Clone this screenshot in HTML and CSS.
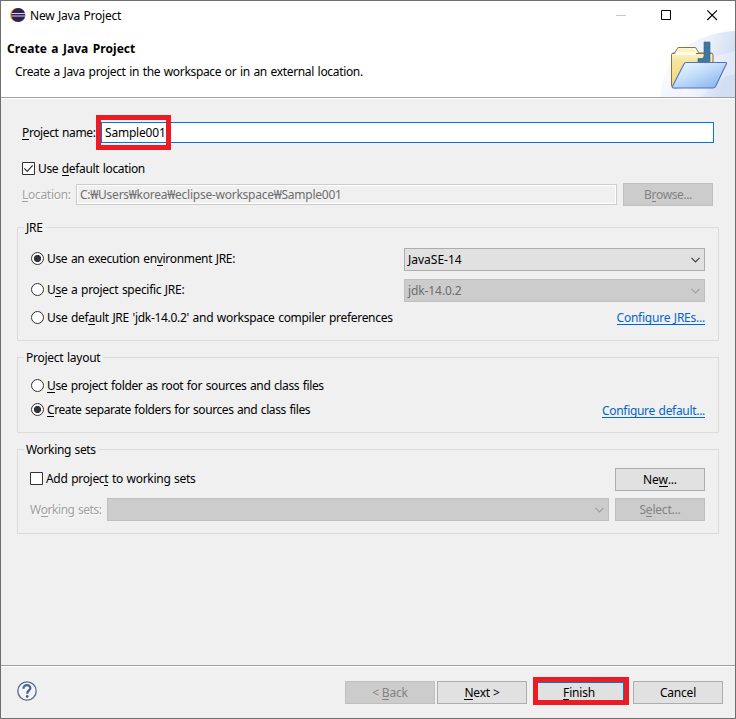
FILE: index.html
```html
<!DOCTYPE html>
<html lang="en">
<head>
<meta charset="utf-8">
<title>New Java Project</title>
<link rel="stylesheet" href="styles.css">
</head>
<body>
<main class="window">
  <header class="header">
    <div class="titlebar">
      <svg class="app-icon" width="16" height="16" viewBox="0 0 16 16">
        <circle cx="7.2" cy="8" r="7.1" fill="#f7941e"/>
        <circle cx="8.3" cy="8" r="7" fill="#2c2255"/>
        <path d="M1.500 6.500h13.800M1.500 9h13.800" stroke="#d5d2e6" stroke-width="1.200"/>
      </svg>
      <span class="t t-title">New Java Project</span>
      <svg class="controls" width="102" height="12" viewBox="0 0 102 12" fill="none">
        <path d="M0 6.5h10" stroke="#c8c8c8"/>
        <path d="M45.500 1.500h9v9h-9z" stroke="#000"/>
        <path d="M91.300 1.300l9.700 9.700M101 1.300l-9.700 9.700" stroke="#000" stroke-width="1.100"/>
      </svg>
    </div>
    <div class="banner-text">
      <h1 class="t t-head">Create a Java Project</h1>
      <p class="t t-sub">Create a Java project in the workspace or in an external location.</p>
    </div>
    <svg class="banner" width="75" height="66" viewBox="0 0 75 66">
      <defs>
        <linearGradient id="swoosh" x1="0" y1="0" x2="1" y2=".3"><stop offset="0" stop-color="#fdfdff"/><stop offset=".6" stop-color="#edf2fb"/><stop offset="1" stop-color="#d3def3"/></linearGradient>
        <linearGradient id="back" x1="0" y1="0" x2="0" y2="1"><stop offset="0" stop-color="#fffdf0"/><stop offset=".35" stop-color="#f5e49b"/><stop offset="1" stop-color="#f0d878"/></linearGradient>
        <linearGradient id="front" x1="0" y1="0" x2=".9" y2="1"><stop offset="0" stop-color="#f2faff"/><stop offset=".45" stop-color="#c5dffa"/><stop offset="1" stop-color="#86b0ec"/></linearGradient>
      </defs>
      <path d="M0 66C1 48 9 31 22 19C38 6 56 1 75 0V66z" fill="url(#swoosh)"/>
      <path d="M38 33Q54 25 75 20V43Q55 46 42 66H20Q25 42 38 33z" fill="#fff" opacity=".3"/>
      <g transform="translate(-1)">
      <path d="M12.500 55V23.500q0-1.500 2-1.500h1l3.500-5.500h17.500l3.500 5.500h12q2 0 2 2V52l-38 5z" fill="url(#back)" stroke="#8c7048"/>
      <path d="M13.500 22.500h39" stroke="#8c7048" stroke-width="1"/>
      <path d="M17 21.500h20l-2.500-4h-15z" fill="#fbf3c4"/>
      <path d="M14 24h23v-3h-19z" fill="#fffce8"/>
      <path d="M45 11h6v18q0 6-6 6h-6v-7.500h3.500q2.500 0 2.500-3z" fill="#41779f" stroke="#2c6392" stroke-width=".6"/>
      <path d="M27 31.500h39.500q1.700 0 .8 1.500L56.500 55.500q-.8 1.500-2.500 1.500H14.500q-2 0-1-1.800L25 33q.8-1.500 2-1.500z" fill="url(#front)" stroke="#5471ba" stroke-width="1.100"/>
      </g>
    </svg>
  </header>

  <section class="content">
    <div class="row name-row">
      <label class="t t-name"><u>P</u>roject name:</label>
      <div class="input active"><span class="t t-sample">Sample001</span><i class="mark mark-name"></i></div>
    </div>
    <div class="row default-row">
      <svg class="check" width="13" height="13" viewBox="0 0 13 13"><path d="M.5.5h12v12H.5z" fill="#fff" stroke="#333"/><path d="M2.300 6.300l2.900 3 5.500-6" fill="none" stroke="#333" stroke-width="1.200"/></svg>
      <label class="t t-default">Use <u>d</u>efault location</label>
    </div>
    <div class="row location-row">
      <label class="t t-loc etched"><u>L</u>ocation:</label>
      <div class="input disabled"><span class="t t-path">C:₩Users₩korea₩eclipse-workspace₩Sample001</span></div>
      <button class="btn" disabled><span class="t t-browse">B<u>r</u>owse...</span></button>
    </div>

    <section class="group jre">
      <h2 class="t t-jre">JRE</h2>
      <div class="row line-1">
        <div class="option"><i class="radio on"></i><label class="t t-r1">Use an execution en<u>v</u>ironment JRE:</label></div>
        <div class="combo"><span class="t t-se">JavaSE-14</span><svg width="9" height="6" viewBox="0 0 9 6"><path d="M.5.8l4 4 4-4"/></svg></div>
      </div>
      <div class="row line-2">
        <div class="option"><i class="radio"></i><label class="t t-r2">U<u>s</u>e a project specific JRE:</label></div>
        <div class="combo off"><span class="t t-jdk">jdk-14.0.2</span><svg width="9" height="6" viewBox="0 0 9 6"><path d="M.5.8l4 4 4-4"/></svg></div>
      </div>
      <div class="row line-3">
        <i class="radio"></i><label class="t t-r3">Use def<u>a</u>ult JRE 'jdk-14.0.2' and workspace compiler preferences</label>
        <a class="t link t-l1">Configure JREs...</a>
      </div>
    </section>

    <section class="group layout">
      <h2 class="t t-lay">Project layout</h2>
      <div class="row line-4"><i class="radio"></i><label class="t t-r4"><u>U</u>se project folder as root for sources and class files</label></div>
      <div class="row line-5"><i class="radio on"></i><label class="t t-r5"><u>C</u>reate separate folders for sources and class files</label>
        <a class="t link t-l2">Configure default...</a>
      </div>
    </section>

    <section class="group sets">
      <h2 class="t t-ws">Working sets</h2>
      <div class="row line-6">
        <div class="option"><svg class="check" width="13" height="13" viewBox="0 0 13 13"><path d="M.5.5h12v12H.5z" fill="#fff" stroke="#333"/></svg>
        <label class="t t-add">Add projec<u>t</u> to working sets</label></div>
        <button class="btn"><span class="t t-new">Ne<u>w</u>...</span></button>
      </div>
      <div class="row line-7">
        <label class="t t-wsl etched">W<u>o</u>rking sets:</label>
        <div class="combo off wide"><svg width="9" height="6" viewBox="0 0 9 6"><path d="M.5.8l4 4 4-4"/></svg></div>
        <button class="btn" disabled><span class="t t-sel">S<u>e</u>lect...</span></button>
      </div>
    </section>
  </section>

  <footer class="footer">
    <svg class="help" width="20" height="20" viewBox="0 0 20 20" fill="none">
      <circle cx="10" cy="10" r="9.200" fill="#f5f5f8" stroke="#566b92" stroke-width="1.300"/>
      <path d="M6.500 7.700C6.300 2.900 13.500 3 13.300 7.200C13.200 9.400 10.200 9.700 10.200 12.700" stroke="#4b6390" stroke-width="2.300"/>
      <circle cx="10.200" cy="15.500" r="1.400" fill="#4b6390"/>
    </svg>
    <button class="btn back" disabled><span class="t t-back">&lt; <u>B</u>ack</span></button>
    <button class="btn next"><span class="t t-next"><u>N</u>ext &gt;</span></button>
    <button class="btn finish"><span class="t t-finish"><u>F</u>inish</span><i class="mark mark-finish"></i></button>
    <button class="btn cancel"><span class="t t-cancel">Cancel</span></button>
  </footer>
</main>
</body>
</html>
```
FILE: styles.css
```css
* { box-sizing: border-box; }
body { margin: 0; font: 12px/16px "Noto Sans", "Noto Sans CJK KR", sans-serif; color: #000; }
h1, h2, p { margin: 0; font: inherit; }
.window { width: 736px; height: 719px; border: 1px solid #6f6f6f; background: #f0f0f0; display: flex; flex-direction: column; overflow: hidden; }
.t { display: block; white-space: nowrap; flex: none; letter-spacing: -0.3px; word-spacing: 0.8px; }
.btn .t { letter-spacing: -0.2px; word-spacing: 0; }
u { text-decoration: none; box-shadow: inset 0 -1px currentColor; display: inline-block; height: 15px; line-height: 16px; vertical-align: top; }

.header { position: relative; height: 98px; flex: none; background: #fff; border-bottom: 1px solid #fff; box-shadow: inset 0 -1px #a0a0a0; }
.titlebar { display: flex; align-items: center; height: 28px; padding: 0 17px 0 9px; }
.app-icon { margin-right: 4px; }
.t-title { letter-spacing: -0.24px; padding-top: 1px; }
.controls { margin-left: auto; }
.banner-text { padding: 12px 0 0 6px; }
.t-head { font-weight: 700; letter-spacing: 0.06px; word-spacing: 1.2px; }
.t-sub { margin: 7px 0 0 8px; letter-spacing: -0.33px; }
.banner { position: absolute; right: 0; bottom: 1px; }

.content { flex: 1; padding: 23px 15px 0 16px; }
.row { display: flex; align-items: center; }
.name-row { height: 21px; padding: 0 6px 0 5px; }
.t-name { width: 79px; letter-spacing: -0.38px; }
.t-default { letter-spacing: -0.35px; }
.t-sample { letter-spacing: -0.2px; }
.input { height: 21px; flex: 1; display: flex; align-items: center; background: #fff; border: 1px solid #0078d7; position: relative; padding-left: 3px; }
.input.disabled { background: #f0f0f0; border-color: #ccc; box-shadow: inset 0 0 0 1px #fff; color: #6d6d6d; }
.mark { position: absolute; border: 5px solid #ed1c24; z-index: 2; }
.mark-name { left: -6px; top: -8px; width: 75px; height: 35px; }
.default-row { height: 16px; margin-top: 18px; padding-left: 5px; }
.check { margin-right: 3px; flex: none; }
.default-row .check { margin-top: -1px; }
.location-row { height: 23px; margin-top: 6px; padding: 0 7px 0 5px; }
.t-loc { width: 54px; }
.t-path { letter-spacing: -0.25px; }
.location-row .btn { margin-left: 6px; }
.btn .t-browse { letter-spacing: -0.4px; }
.etched { color: #a0a0a0; text-shadow: 1px 1px #fff; }
.btn { position: relative; width: 90px; height: 23px; padding: 0; flex: none; display: flex; justify-content: center; align-items: center; font: inherit; color: #000; background: #e1e1e1; border: 1px solid #adadad; }
.btn:disabled { background: #ccc; border-color: #bfbfbf; color: #838383; }

.group { border: 1px solid #dcdcdc; width: 702px; padding: 0 13px; }
.group h2 { width: max-content; height: 16px; margin: -8px 0 0 -7px; padding: 0 3px 0 2px; background: #f0f0f0; }
.group .t-lay { letter-spacing: -0.26px; }
.group .t-ws { letter-spacing: -0.35px; margin-left: -6px; }
.jre { height: 114px; margin-top: 21px; }
.layout { height: 76px; margin-top: 16px; }
.layout h2 { margin-top: -9px; padding-top: 1px; height: 16px; }
.group.layout h2 { margin-top: -8px; padding-top: 0; }
.sets { height: 85px; margin-top: 16px; padding-left: 12px; }
.option { display: flex; align-items: center; height: 23px; padding-bottom: 2px; }
.radio { width: 13px; height: 13px; border: 1px solid #333; border-radius: 50%; background: #fff; flex: none; margin: -1px 3px 0 0; }
.option .radio { margin-top: 0; }
.radio.on { background: radial-gradient(circle at center, #333 3.2px, #fff 4px); }
.combo { margin-left: auto; width: 301px; height: 23px; border: 1px solid #adadad; background: #e1e1e1; display: flex; align-items: center; padding: 0 4px 0 3px; }
.combo svg { margin-left: auto; fill: none; stroke: #404040; stroke-width: 1.2; }
.combo.off { background: #ccc; border-color: #bfbfbf; color: #6d6d6d; }
.combo.off svg { stroke: #a0a0a0; }
.combo.wide { width: 502px; margin: 0 6px 0 auto; }
.t-se { letter-spacing: 0; }
.t-jdk { letter-spacing: -0.1px; }
.t-r1 { letter-spacing: -0.33px; }
.t-r2 { letter-spacing: -0.3px; }
.t-r4 { letter-spacing: -0.37px; }
.t-r5 { letter-spacing: -0.41px; }
.t-wsl { letter-spacing: -0.45px; }
.link { margin-left: auto; color: #0066cc; height: 15px; box-shadow: inset 0 -1px #0066cc; }
.t-l1 { letter-spacing: -0.24px; margin-top: -1px; }
.line-5 .t-l2 { letter-spacing: -0.31px; margin-top: 1px; }
.line-1, .line-2 { height: 23px; }
.line-1 { margin-top: 12px; }
.line-2 { margin-top: 8px; }
.line-3 { height: 16px; margin-top: 8px; }
.line-4 { height: 16px; margin-top: 12px; }
.line-5 { height: 16px; margin-top: 8px; }
.line-6 { height: 23px; margin-top: 10px; }
.line-6 .btn { margin-left: auto; }
.line-7 { height: 23px; margin-top: 7px; }

.footer { height: 53px; flex: none; border-top: 1px solid #a0a0a0; box-shadow: inset 0 1px #fff; display: flex; align-items: flex-start; padding: 15px 12px 0 16px; }
.help { margin-right: auto; }
.next { margin-left: 2px; }
.finish { margin-left: 8px; border: 2px solid #0078d7; padding-right: 2px; }
.mark-finish { left: -4px; top: -6px; width: 96px; height: 28px; }
.cancel { margin-left: 8px; }
```
